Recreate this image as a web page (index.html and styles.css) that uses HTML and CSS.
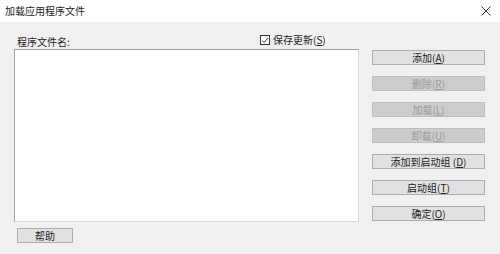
FILE: index.html
```html
<!DOCTYPE html>
<html>
<head>
<meta charset="utf-8">
<link rel="stylesheet" href="styles.css">
</head>
<body>
<div class="window">
  <div class="titlebar">
    <span class="title">加载应用程序文件</span>
    <svg class="close" width="10" height="10" viewBox="0 0 10 10"><path d="M0.5 0.5 L9.5 9.5 M9.5 0.5 L0.5 9.5" stroke="#333" stroke-width="1"/></svg>
  </div>
  <div class="content">
    <div class="left">
      <div class="header">
        <span class="label">程序文件名:</span>
        <label class="check">
          <span class="box"><svg width="9" height="9" viewBox="0 0 9 9"><path d="M1.5 4.5 L3.6 6.7 L7.6 1.8" fill="none" stroke="#222" stroke-width="1"/></svg></span>
          <span>保存更新(<u>S</u>)</span>
        </label>
      </div>
      <div class="list"></div>
      <div class="help-row"><button class="btn help">帮助</button></div>
    </div>
    <div class="right">
      <button class="btn">添加(<u>A</u>)</button>
      <button class="btn disabled">删除(<u>R</u>)</button>
      <button class="btn disabled">加载(<u>L</u>)</button>
      <button class="btn disabled">卸载(<u>U</u>)</button>
      <button class="btn">添加到启动组 (<u>D</u>)</button>
      <button class="btn">启动组(<u>T</u>)</button>
      <button class="btn">确定(<u>O</u>)</button>
    </div>
  </div>
</div>
</body>
</html>
```
FILE: styles.css
```css
* { box-sizing: border-box; }
html, body { margin: 0; padding: 0; }
body {
  width: 500px;
  height: 254px;
  background: #f0f0f0;
  font-family: "Noto Sans CJK SC", "Liberation Sans", sans-serif;
  font-size: 10px;
  color: #222;
  overflow: hidden;
}
.titlebar {
  height: 22px;
  background: #fff;
  display: flex;
  align-items: center;
  justify-content: space-between;
  padding: 0 8px 0 5px;
}
.title { font-size: 10px; line-height: 12px; color: #222; }
.close { display: block; margin-right: 1px; }
.content {
  display: flex;
  padding-left: 14px;
}
.left { width: 345px; }
.header {
  height: 27px;
  display: flex;
  align-items: flex-end;
  position: relative;
}
.label {
  padding-left: 3px;
  line-height: 12px;
  margin-bottom: 1px;
  color: #222;
}
.check {
  position: absolute;
  left: 246px;
  top: 12px;
  display: flex;
  align-items: center;
  gap: 3px;
  line-height: 12px;
  color: #222;
}
.box {
  width: 10px;
  height: 10px;
  border: 1px solid #333;
  background: #fff;
  display: flex;
  align-items: center;
  justify-content: center;
}
.box svg { display: block; }
.list {
  height: 173px;
  background: #fff;
  border: 1px solid;
  border-color: #a0a0a0 #d9d9d9 #d9d9d9 #a0a0a0;
}
.help-row { padding: 6px 0 0 3px; }
.btn {
  display: block;
  width: 113px;
  height: 15px;
  padding: 0;
  margin: 0;
  background: #e1e1e1;
  border: 1px solid #adadad;
  font-family: inherit;
  font-size: 10px;
  line-height: 12px;
  color: #222;
  text-align: center;
}
.btn u { text-underline-offset: 1px; }
.help { width: 56px; }
.disabled {
  background: #cccccc;
  border-color: #bfbfbf;
  color: #9a9a9a;
}
.right {
  margin-left: 13px;
  padding-top: 28px;
  display: flex;
  flex-direction: column;
  gap: 11px;
}
```
